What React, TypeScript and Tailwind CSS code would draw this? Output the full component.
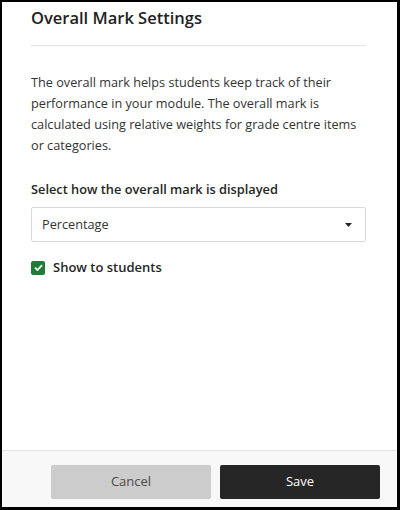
export default function App() {
  return (
    <div
      className="flex h-[510px] w-[400px] flex-col border-2 border-r-[3px] border-b-[3px] border-black bg-white text-[#333333]"
      style={{ fontFamily: '"Open Sans", "Liberation Sans", sans-serif' }}
    >
      <div className="flex-1 pr-[31px] pl-[29px]">
        <h1 className="pt-[4px] text-[16.5px] leading-[24px] font-semibold text-[#222222]">
          Overall Mark Settings
        </h1>
        <div className="mt-[15px] h-px bg-[#e3e3e3]" />
        <p className="mt-[26px] text-[12.7px] leading-[21px]">
          The overall mark helps students keep track of their performance in your
          module. The overall mark is calculated using relative weights for grade
          centre items or categories.
        </p>
        <label className="mt-[23px] block text-[12.8px] leading-[20px] font-semibold text-[#262626]">
          Select how the overall mark is displayed
        </label>
        <div className="mt-[8px] flex h-[35px] items-center justify-between rounded-[2px] border border-[#d9d9d9] pr-[13px] pl-[10px]">
          <span className="text-[12.7px] text-[#333333]">Percentage</span>
          <svg width="7" height="4" viewBox="0 0 7 4">
            <path d="M0 0 L7 0 L3.5 4 Z" fill="#262626" />
          </svg>
        </div>
        <div className="mt-[16px] flex items-center gap-[8px]">
          <span className="flex h-[14px] w-[14px] items-center justify-center rounded-[2px] bg-[#1e7d34]">
            <svg width="9" height="7" viewBox="0 0 10 8">
              <path
                d="M1 4.2 L3.8 7 L9 1.2"
                fill="none"
                stroke="#ffffff"
                strokeWidth="2"
              />
            </svg>
          </span>
          <span className="text-[13px] font-semibold text-[#262626]">
            Show to students
          </span>
        </div>
      </div>
      <div className="flex h-[57px] items-start gap-[9px] border-t border-[#e3e3e3] bg-[#f8f8f8] pt-[14px] pl-[49px]">
        <button className="h-[34px] w-[160px] rounded-[2px] bg-[#cccccc] text-[13px] text-[#4a4a4a]">
          Cancel
        </button>
        <button className="h-[34px] w-[160px] rounded-[2px] bg-[#262626] text-[13px] text-white">
          Save
        </button>
      </div>
    </div>
  );
}
